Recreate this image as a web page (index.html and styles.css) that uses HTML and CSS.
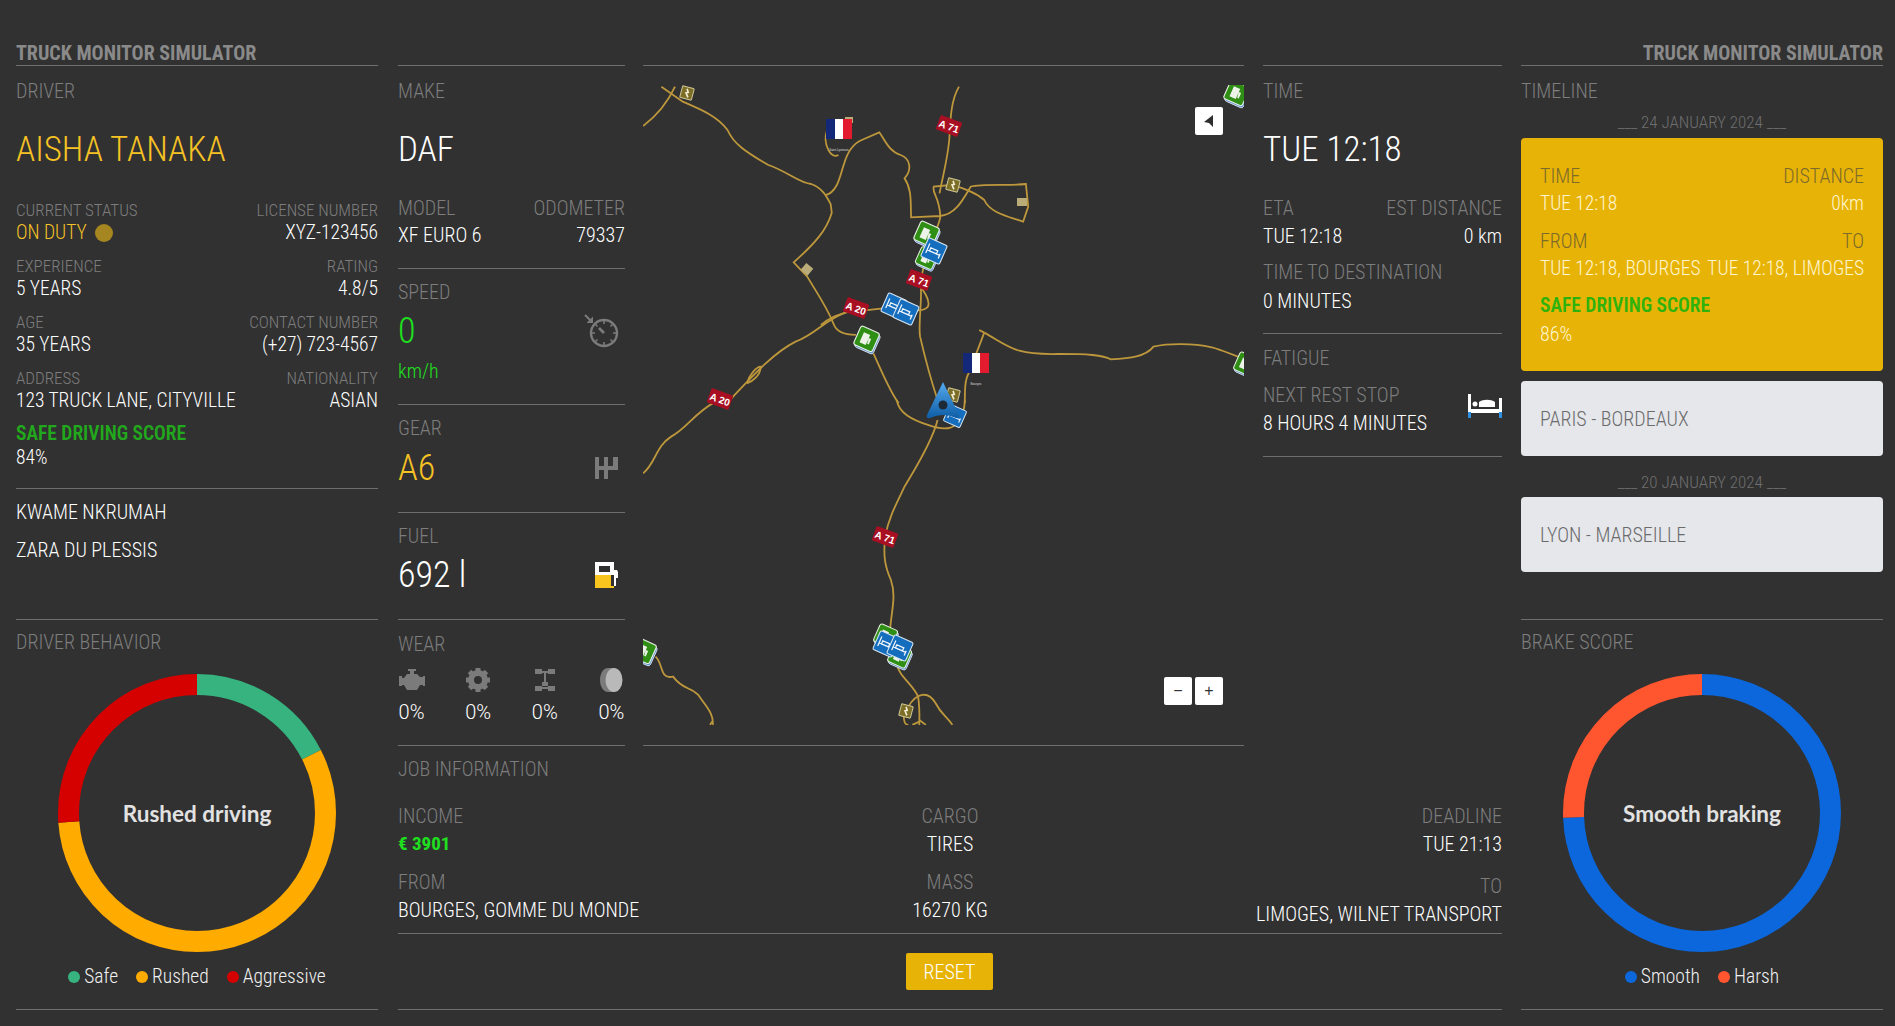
FILE: index.html
```html
<!DOCTYPE html>
<html lang="en">
<head>
    <meta charset="UTF-8">
    <title>Truck Monitor Simulator</title>
    <link rel="stylesheet" href="styles.css">
</head>
<body>
<div class="page">
    <!-- left column -->
    <div class="side">
        <h1 class="brand">TRUCK MONITOR SIMULATOR</h1>
        <section class="sec driver">
            <div class="label">DRIVER</div>
            <div class="big yellow">AISHA TANAKA</div>
            <div class="pair small"><div><span>CURRENT STATUS</span><b class="yellow">ON DUTY <i class="dot"></i></b></div><div class="r"><span>LICENSE NUMBER</span><b>XYZ-123456</b></div></div>
            <div class="pair small"><div><span>EXPERIENCE</span><b>5 YEARS</b></div><div class="r"><span>RATING</span><b>4.8/5</b></div></div>
            <div class="pair small"><div><span>AGE</span><b>35 YEARS</b></div><div class="r"><span>CONTACT NUMBER</span><b>(+27) 723-4567</b></div></div>
            <div class="pair small"><div><span>ADDRESS</span><b>123 TRUCK LANE, CITYVILLE</b></div><div class="r"><span>NATIONALITY</span><b>ASIAN</b></div></div>
            <div class="score">SAFE DRIVING SCORE</div>
            <div class="val">84%</div>
        </section>
        <section class="sec crew">
            <div class="val">KWAME NKRUMAH</div>
            <div class="val">ZARA DU PLESSIS</div>
        </section>
        <section class="sec chart">
            <div class="label">DRIVER BEHAVIOR</div>
            <div class="donut">
                <svg width="278" height="278" viewBox="0 0 278 278">
                    <g class="ring" fill="none" stroke-width="21">
                        <circle cx="139" cy="139" r="128.5" pathLength="360" stroke="#36b37e" stroke-dasharray="63 297"/>
                        <circle cx="139" cy="139" r="128.5" pathLength="360" stroke="#ffab00" stroke-dasharray="203 157" stroke-dashoffset="-63"/>
                        <circle cx="139" cy="139" r="128.5" pathLength="360" stroke="#d50000" stroke-dasharray="94 266" stroke-dashoffset="-266"/>
                    </g>
                </svg>
                <div class="donut-text">Rushed driving</div>
            </div>
            <div class="legend"><span><i style="background:#36b37e"></i>Safe</span><span><i style="background:#ffab00"></i>Rushed</span><span><i style="background:#d50000"></i>Aggressive</span></div>
        </section>
        <div class="sec end"></div>
    </div>

    <!-- center -->
    <div class="center">
        <div class="top">
            <div class="col2">
                <section class="sec make">
                    <div class="label">MAKE</div>
                    <div class="big">DAF</div>
                    <div class="pair"><div><span>MODEL</span><b>XF EURO 6</b></div><div class="r"><span>ODOMETER</span><b>79337</b></div></div>
                </section>
                <section class="sec speed">
                    <div class="label">SPEED</div>
                    <div class="metric">
                        <div class="num green">0</div>
                        <svg class="ico" width="36" height="36" viewBox="0 0 36 36" fill="none" stroke="#7b7b7b">
                            <circle cx="21" cy="20" r="13" stroke-width="2.4"/>
                            <path d="M21 8v3M21 29v3M9 20h3M30 20h3M12.500 11.500l2 2M29.500 11.500l-2 2M12.500 28.500l2-2M29.500 28.500l-2-2" stroke-width="1.600"/>
                            <path d="M16 15l5 5" stroke-width="2.600"/>
                            <path d="M2 2l7 7" stroke-width="2"/>
                            <path d="M10 3.500V10H3.500z" fill="#7b7b7b" stroke="none"/>
                        </svg>
                    </div>
                    <div class="unit green">km/h</div>
                </section>
                <section class="sec gear">
                    <div class="label">GEAR</div>
                    <div class="metric">
                        <div class="num yellow">A6</div>
                        <svg class="ico" width="24" height="24" viewBox="0 0 24 24" fill="#7b7b7b">
                            <path d="M0 1h4v9h5V1h4v9h5V1h5v13H13v9H9v-9H4v9H0z"/>
                        </svg>
                    </div>
                </section>
                <section class="sec fuel">
                    <div class="label">FUEL</div>
                    <div class="metric">
                        <div class="num white">692 l</div>
                        <svg class="ico" width="24" height="26" viewBox="0 0 24 26">
                            <path d="M0 0h19v26H0z" fill="#f7c51e"/>
                            <path d="M0 0h19v13H0z" fill="#fff"/>
                            <path d="M4 4h11v6H4z" fill="#303030"/>
                            <path d="M19 8h3l1 2v6h-2v8h-2z" fill="#fff"/>
                            <path d="M16 13h3v11h-3z" fill="#303030"/>
                        </svg>
                    </div>
                </section>
                <section class="sec wear">
                    <div class="label">WEAR</div>
                    <div class="wear-row">
                        <div>
                            <svg width="26" height="24" viewBox="0 0 26 24" fill="#7b7b7b"><path d="M9 1h8v2h-2v3h3l3 3h3v-1h2v10h-2v-1h-3l-3 5H8l-3-5H3v1H0V8h3v2h2l3-4h3V3H9z"/></svg>
                            <span>0%</span>
                        </div>
                        <div>
                            <svg width="24" height="24" viewBox="0 0 24 24"><circle cx="12" cy="12" r="7" fill="none" stroke="#7b7b7b" stroke-width="6"/><path d="M12 0v24M0 12h24M3.500 3.500l17 17M20.500 3.500l-17 17" stroke="#7b7b7b" stroke-width="5" stroke-dasharray="4 16 4"/></svg>
                            <span>0%</span>
                        </div>
                        <div>
                            <svg width="20" height="24" viewBox="0 0 20 24" fill="#7b7b7b"><path d="M0 1h7v5H0zM13 1h7v5h-7zM0 18h7v5H0zM13 18h7v5h-7z"/><path d="M9 3h2v11h2v4H7v-4h2z"/><path d="M3 3h14v2H3z"/><path d="M3 19h14v2H3z"/></svg>
                            <span>0%</span>
                        </div>
                        <div>
                            <svg width="23" height="24" viewBox="0 0 23 24"><path d="M8 0h6v24H8C3 24 0 18 0 12S3 0 8 0z" fill="#7b7b7b"/><ellipse cx="14" cy="12" rx="8.500" ry="12" fill="#b9b9b9"/></svg>
                            <span>0%</span>
                        </div>
                    </div>
                </section>
            </div>

            <div class="map">
                <svg class="map-svg" width="601" height="640" viewBox="3 25 601 640">
                    <defs>
                        <linearGradient id="marker-fill" x1="0" y1="0" x2="0" y2="1">
                            <stop offset="0" stop-color="#55aaee"/>
                            <stop offset="1" stop-color="#0e5da6"/>
                        </linearGradient>
                        <g id="sign-green">
                            <rect x="-11" y="-11" width="24" height="24" rx="3" fill="#5a8fd0" stroke="#dce6f0"/>
                            <rect x="-13" y="-13" width="24" height="24" rx="3" fill="#2f8f14" stroke="#e8efe4" stroke-width="1.300"/>
                            <path d="M-7-7h8v13h-8zM1-3h3v7H2" fill="#eef3ea"/>
                        </g>
                        <g id="sign-blue">
                            <rect x="-12" y="-12" width="24" height="24" rx="2" fill="#146dbd" stroke="#d5e4f2" stroke-width="1.300"/>
                            <path d="M-8-6v12M8 0v6M-8 2H8M-5-2h9v4h-9z" fill="none" stroke="#f1f6fb" stroke-width="1.500"/>
                        </g>
                        <g id="sign-olive">
                            <rect x="-6" y="-6" width="12" height="12" rx="1" fill="#7c6e26" stroke="#cfc79a"/>
                            <path d="M-1-4l2 3-2 1 3 4" fill="none" stroke="#f4f0d8" stroke-width="1.600"/>
                        </g>
                        <g id="flag">
                            <rect x="-13" y="-10" width="9" height="20" fill="#14287a"/>
                            <rect x="-4" y="-10" width="8" height="20" fill="#fff"/>
                            <rect x="4" y="-10" width="9" height="20" fill="#e21c2e"/>
                        </g>
                    </defs>
                    <g class="roads" transform="scale(.389 .3333)">
                        <path d="M8 198C40 170 70 130 90 80"/>
                        <path d="M55 80L110 125C160 150 200 170 225 210C240 250 270 275 330 315C380 335 410 370 440 372C470 385 480 410 490 432L493 458C480 510 450 550 395 607L430 650C450 690 480 740 497 790C505 820 530 825 555 825"/>
                        <path d="M478 405C510 395 515 340 525 310C535 270 550 250 570 240L615 217C630 240 640 275 670 285C695 295 700 330 680 355C700 390 695 430 697 472L770 468C810 465 830 420 850 380C880 370 950 378 992 372L998 440L985 485C950 470 900 460 885 420C860 395 830 385 800 375L755 380C750 400 770 410 772 470C770 490 760 510 755 530"/>
                        <path d="M480 215C470 250 490 300 510 285"/>
                        <path d="M820 80C800 120 798 170 795 240C790 300 780 340 770 400"/>
                        <path d="M755 530C740 560 725 620 722 680C725 720 715 800 720 830C730 880 745 950 765 1020"/>
                        <path d="M235 1015C280 960 340 880 400 845C450 825 480 775 530 757L625 745L710 752C740 750 750 740 735 705L722 680"/>
                        <path d="M465 795C490 770 510 765 535 755"/>
                        <path d="M275 970C280 945 300 920 310 920C310 945 290 965 275 970"/>
                        <path d="M600 880C620 930 640 990 665 1030"/>
                        <path d="M885 818L872 810"/>
                        <path d="M885 818C950 860 960 885 1075 882C1150 882 1190 885 1210 898C1260 895 1300 890 1320 860C1360 850 1420 850 1470 862C1500 870 1530 890 1553 895"/>
                        <path d="M885 818L845 940C835 960 835 990 835 1030"/>
                        <g transform="translate(0 1020)">
                            <path d="M660 0C665 40 700 60 740 75C770 88 800 90 815 70C835 40 835 10 835 0"/>
                            <path d="M765 60C750 130 700 220 680 260C660 310 640 350 630 410C625 470 630 500 645 540C660 590 645 640 643 690"/>
                            <path d="M660 790C665 830 700 850 715 890C720 930 718 960 718 975"/>
                            <path d="M690 920C710 880 740 870 760 910C775 945 790 950 803 975"/>
                            <path d="M690 920C670 950 680 975 690 975M718 960L735 975M700 975L718 965"/>
                            <path d="M8 220C40 190 40 140 80 110C120 85 140 40 190 8"/>
                            <path d="M40 770C60 790 50 840 85 830C110 870 130 860 150 885C170 920 190 940 187 975M180 975L185 965"/>
                        </g>
                    </g>

                    <use href="#sign-olive" transform="translate(47 33) rotate(15)"/>
                    <use href="#sign-olive" transform="translate(313 125) rotate(15)"/>
                    <use href="#sign-olive" transform="translate(313 335) rotate(15)"/>
                    <use href="#sign-olive" transform="translate(266 651) rotate(15)"/>
                    <rect class="spot" x="377" y="138" width="10" height="8"/>
                    <rect class="spot" x="162" y="205" width="9" height="9" transform="rotate(40 167 210)"/>
                    <rect class="spot" x="205" y="57" width="8" height="6"/>

                    <use href="#flag" transform="translate(199 69)"/>
                    <use href="#flag" transform="translate(336 303)"/>
                    <text class="town" x="199" y="91">Saint-Lyonnais</text>
                    <text class="town" x="336" y="325">Bourges</text>

                    <use href="#sign-green" transform="translate(287 175) rotate(24) scale(.85)"/>
                    <use href="#sign-green" transform="translate(287 199) rotate(24) scale(.75)"/>
                    <use href="#sign-blue" transform="translate(294 191) rotate(24) scale(.85)"/>
                    <use href="#sign-blue" transform="translate(254 246) rotate(24) scale(.85)"/>
                    <use href="#sign-blue" transform="translate(266 252) rotate(24) scale(.85)"/>
                    <use href="#sign-green" transform="translate(227 280) rotate(24) scale(.85)"/>
                    <use href="#sign-green" transform="translate(597 34) rotate(24) scale(.85)"/>
                    <use href="#sign-green" transform="translate(606 305) rotate(24) scale(.8)"/>
                    <use href="#sign-green" transform="translate(4 592) rotate(24) scale(.85)"/>
                    <use href="#sign-green" transform="translate(246 577) rotate(24) scale(.8)"/>
                    <use href="#sign-green" transform="translate(260 597) rotate(24) scale(.8)"/>
                    <use href="#sign-blue" transform="translate(246 584) rotate(24) scale(.85)"/>
                    <use href="#sign-blue" transform="translate(260 588) rotate(24) scale(.85)"/>
                    <use href="#sign-blue" transform="translate(315 356) rotate(24) scale(.75)"/>

                    <g class="shield" transform="translate(309 66) rotate(20)"><rect x="-11.500" y="-7.500" width="23" height="15" rx="1"/><text y="4">A 71</text></g>
                    <g class="shield" transform="translate(279 220) rotate(20)"><rect x="-11.500" y="-7.500" width="23" height="15" rx="1"/><text y="4">A 71</text></g>
                    <g class="shield" transform="translate(216 248) rotate(20)"><rect x="-11.500" y="-7.500" width="23" height="15" rx="1"/><text y="4">A 20</text></g>
                    <g class="shield" transform="translate(80 339) rotate(20)"><rect x="-11.500" y="-7.500" width="23" height="15" rx="1"/><text y="4">A 20</text></g>
                    <g class="shield" transform="translate(245 477) rotate(20)"><rect x="-11.500" y="-7.500" width="23" height="15" rx="1"/><text y="4">A 71</text></g>

                    <path d="M303 322L319 355Q320 359 316 358Q303 352 290 358Q286 359 287 355z" fill="url(#marker-fill)"/>
                    <circle cx="303" cy="345" r="4.500" fill="#1d2a36"/>
                </svg>
                <div class="map-btn back"><svg width="10" height="12" viewBox="0 0 10 12"><path d="M9 0v12L5 8 0 7z" fill="#2e2e2e"/></svg></div>
                <div class="map-zoom"><div class="map-btn">−</div><div class="map-btn">+</div></div>
            </div>

            <div class="col4">
                <section class="sec times">
                    <div class="label">TIME</div>
                    <div class="big">TUE 12:18</div>
                    <div class="pair"><div><span>ETA</span><b>TUE 12:18</b></div><div class="r"><span>EST DISTANCE</span><b>0 km</b></div></div>
                    <div class="pair next"><div><span>TIME TO DESTINATION</span><b>0 MINUTES</b></div></div>
                </section>
                <section class="sec fatigue">
                    <div class="label">FATIGUE</div>
                    <div class="metric rest">
                        <div class="pair"><div><span>NEXT REST STOP</span><b>8 HOURS 4 MINUTES</b></div></div>
                        <svg width="34" height="24" viewBox="0 0 34 24">
                            <path d="M0 0h3v15h28V4h3v20h-3v-5H3v5H0z" fill="#fff"/>
                            <path d="M0 18h3v6H0zM31 18h3v6h-3z" fill="#2f8fe0"/>
                            <circle cx="7" cy="10" r="2.500" fill="#fff"/>
                            <path d="M11 8c4-3 12-3 16 0v5H11z" fill="#fff"/>
                        </svg>
                    </div>
                </section>
            </div>
        </div>

        <section class="job">
            <div class="label">JOB INFORMATION</div>
            <div class="job-grid">
                <div><span>INCOME</span><b class="income">€ 3901</b></div>
                <div class="c"><span>CARGO</span><b>TIRES</b></div>
                <div class="r"><span>DEADLINE</span><b>TUE 21:13</b></div>
                <div><span>FROM</span><b>BOURGES, GOMME DU MONDE</b></div>
                <div class="c"><span>MASS</span><b>16270 KG</b></div>
                <div class="r low"><span>TO</span><b>LIMOGES, WILNET TRANSPORT</b></div>
            </div>
        </section>
        <div class="reset-bar"><button class="reset">RESET</button></div>
        <div class="sec end"></div>
    </div>

    <!-- right column -->
    <div class="side last">
        <h1 class="brand right">TRUCK MONITOR SIMULATOR</h1>
        <section class="sec timeline">
            <div class="label">TIMELINE</div>
            <div class="date">___ 24 JANUARY 2024 ___</div>
            <div class="trip active">
                <div class="pair"><div><span>TIME</span><b>TUE 12:18</b></div><div class="r"><span>DISTANCE</span><b>0km</b></div></div>
                <div class="pair"><div><span>FROM</span><b>TUE 12:18, BOURGES</b></div><div class="r"><span>TO</span><b>TUE 12:18, LIMOGES</b></div></div>
                <div class="score">SAFE DRIVING SCORE</div>
                <div class="val">86%</div>
            </div>
            <div class="trip">PARIS - BORDEAUX</div>
            <div class="date">___ 20 JANUARY 2024 ___</div>
            <div class="trip">LYON - MARSEILLE</div>
        </section>
        <section class="sec chart">
            <div class="label">BRAKE SCORE</div>
            <div class="donut">
                <svg width="278" height="278" viewBox="0 0 278 278">
                    <g class="ring" fill="none" stroke-width="21">
                        <circle cx="139" cy="139" r="128.5" pathLength="360" stroke="#0b67db" stroke-dasharray="268 92"/>
                        <circle cx="139" cy="139" r="128.5" pathLength="360" stroke="#ff5630" stroke-dasharray="92 268" stroke-dashoffset="-268"/>
                    </g>
                </svg>
                <div class="donut-text">Smooth braking</div>
            </div>
            <div class="legend"><span><i style="background:#0b67db"></i>Smooth</span><span><i style="background:#ff5630"></i>Harsh</span></div>
        </section>
        <div class="sec end"></div>
    </div>
</div>
</body>
</html>
```
FILE: styles.css
```css
*{margin:0;padding:0;box-sizing:border-box;}
html,body{height:100%;}
body{background:#313131;color:#fff;font-family:Roboto,"Liberation Sans",sans-serif;font-stretch:75%;font-size:20px;overflow:hidden;}
b{font-weight:350;display:block;line-height:24px;}
i{font-style:normal;}

.page{display:grid;grid-template-columns:362px 1104px 362px;column-gap:19px;padding-left:16px;height:1026px;}
.side{display:flex;flex-direction:column;}
.side.last{margin-left:1px;margin-right:-1px;}
.center{padding-top:65px;display:flex;flex-direction:column;margin-left:1px;margin-right:-1px;}

.brand{font-size:20px;font-weight:700;color:#8a8a8a;height:65px;padding-top:42px;line-height:22px;}
.brand.right{text-align:right;}

.sec{border-top:1px solid #6e6e6e;}
.label{font-weight:300;line-height:24px;color:#7d7d7d;padding-top:13px;box-sizing:content-box;height:24px;}
.big{font-size:35px;font-weight:300;line-height:40px;margin-top:27px;}
.yellow{color:#f6c224;}
.green{color:#1fe01f;}
.white{color:#fff;}

.pair{display:flex;justify-content:space-between;}
.pair span{display:block;color:#7d7d7d;font-weight:300;line-height:24px;}
.pair b{margin-top:4px;}
.pair .r{text-align:right;}
.pair.small span{font-size:17px;line-height:20px;}
.pair.small b{margin-top:1px;font-size:19.5px;}
.pair.small{margin-bottom:11px;}

.dot{display:inline-block;width:18px;height:18px;border-radius:50%;background:#a58620;vertical-align:-3px;margin-left:4px;}

.score{font-size:19.5px;font-weight:600;color:#22a81c;line-height:24px;}
.val{line-height:24px;font-weight:350;}

.driver{height:423px;}
.driver .big{margin-bottom:30px;}
.driver .score{margin-top:-2px;}
.driver .val{font-size:19.5px;}
.crew{height:131px;padding-top:11px;}
.crew .val+.val{margin-top:14px;}
.chart{height:390px;position:relative;}
.chart .label{padding-top:10px;}
.end{height:10px;}

.donut{position:relative;width:278px;height:278px;margin:20px auto 0;}
.ring{transform:rotate(-90deg);transform-origin:139px 139px;}
.donut-text{position:absolute;inset:0;display:flex;align-items:center;justify-content:center;font-family:"Lato",sans-serif;font-stretch:normal;font-size:22.5px;font-weight:700;color:#e2e2e2;}
.legend{display:flex;justify-content:center;gap:18px;margin-top:13px;line-height:24px;font-size:19.5px;font-weight:350;color:#f0f0f0;}
.legend i{display:inline-block;width:12px;height:12px;border-radius:50%;margin-right:4px;}

.top{display:flex;gap:18px;height:681px;}
.col2{width:227px;border-bottom:1px solid #6e6e6e;}
.col4{width:239px;}
.map{flex:1;position:relative;margin-right:1px;border-top:1px solid #6e6e6e;border-bottom:1px solid #6e6e6e;}

.make{height:203px;}
.make .big{margin-bottom:26px;}
.make .pair b{margin-top:3px;}
.speed{height:136px;}
.gear{height:108px;}
.fuel{height:107px;}
.wear{height:125px;}
.speed .label,.gear .label,.fuel .label{padding-top:11px;}
.wear .label{padding-top:12px;}
.metric{display:flex;justify-content:space-between;align-items:center;}
.num{font-size:36px;font-weight:300;line-height:40px;}
.speed .metric{margin-top:7px;}
.gear .metric{margin-top:8px;}
.fuel .metric{margin-top:7px;}
.ico{margin-right:6px;}
.unit{line-height:24px;font-weight:350;margin-top:8px;}
.wear-row{display:flex;justify-content:space-between;margin-top:12px;}
.wear-row div{width:27px;display:flex;flex-direction:column;align-items:center;gap:8px;}
.wear-row span{line-height:24px;font-weight:300;font-stretch:normal;}
.wear-row svg{display:block;}

.map-svg{display:block;position:absolute;left:0;top:19px;}
.roads path{fill:none;stroke:#bd973c;stroke-width:1.800;vector-effect:non-scaling-stroke;}
.spot{fill:#b9ac78;}
.town{font-family:"Liberation Sans",sans-serif;font-size:3px;fill:#ddd;text-anchor:middle;}
.shield rect{fill:#a90f22;}
.shield text{font-family:"Liberation Sans",sans-serif;font-size:10px;font-weight:700;fill:#fff;text-anchor:middle;font-stretch:normal;}
.map-btn{width:28px;height:28px;background:#fff;border-radius:2px;color:#333;display:flex;align-items:center;justify-content:center;font-size:16px;line-height:1;font-family:"Liberation Sans",sans-serif;}
.map-btn.back{position:absolute;right:21px;top:41px;}
.map-zoom{position:absolute;right:21px;top:611px;display:flex;gap:3px;}

.times{height:268px;}
.times .big{margin-bottom:26px;}
.next{margin-top:12px;}
.next b{margin-top:5px;}
.fatigue{height:124px;border-bottom:1px solid #6e6e6e;}
.fatigue .label{padding-top:12px;}
.rest{margin-top:13px;}
.rest svg{margin-top:-6px;}

.job{height:187px;}
.job .label{padding-top:11px;}
.job-grid{display:grid;grid-template-columns:1fr auto 1fr;row-gap:14px;margin-top:23px;}
.job-grid span{display:block;color:#7d7d7d;font-weight:300;line-height:24px;}
.job-grid b{margin-top:4px;}
.job-grid .c{text-align:center;}
.job-grid .r{text-align:right;}
.job-grid .low{margin-top:4px;}
.income{color:#1fe01f;font-size:19px;font-weight:700;}

.reset-bar{height:76px;border-top:1px solid #6e6e6e;display:flex;justify-content:center;align-items:center;}
.reset{width:87px;height:37px;margin-right:1px;background:#e8b307;border:0;border-radius:2px;color:#fff;font:inherit;font-weight:300;}

.timeline{height:554px;}
.date{text-align:center;color:#6e6e6e;font-size:17px;line-height:20px;margin-top:9px;margin-bottom:6px;font-weight:300;}
.trip{background:#e5e7eb;border-radius:4px;color:#6b6b6b;height:75px;padding:0 19px;display:flex;align-items:center;font-weight:300;margin-bottom:10px;}
.trip+.date{margin-top:16px;margin-bottom:5px;}
.trip.active{background:#e8b307;height:233px;display:block;padding-top:26px;color:#fff5cf;}
.trip.active b{font-size:19.5px;}
.trip.active .pair span{color:#7c6a2a;}
.trip.active .pair{margin-bottom:13px;}
.trip.active .score{color:#2fb30c;margin-bottom:4px;}
```
